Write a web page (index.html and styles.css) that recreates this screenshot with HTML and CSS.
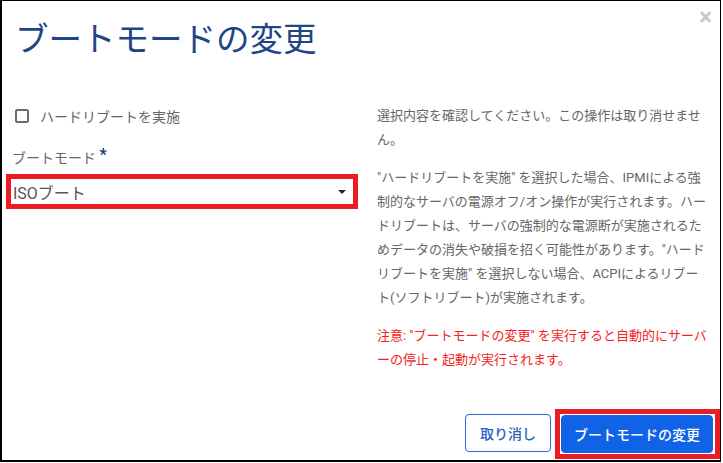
FILE: index.html
```html
<!DOCTYPE html>
<html lang="ja">
<head>
<meta charset="utf-8">
<title>ブートモードの変更</title>
<meta name="viewport" content="width=device-width, initial-scale=1">
<link rel="stylesheet" href="styles.css">
</head>
<body>

<div class="dialog">
	<div class="dialog-head">
		<h1>ブートモードの変更</h1>
		<span class="close">&times;</span>
	</div><!-- dialog-head -->

	<div class="dialog-body">
		<div class="col-left">
			<label class="check-row">
				<span class="checkbox"></span>
				ハードリブートを実施
			</label>

			<div class="field-label">ブートモード <span class="req">*</span></div>
			<div class="select mark">
				<span>ISOブート</span>
				<span class="caret"></span>
			</div>
		</div><!-- col-left -->

		<div class="col-right">
			<p>選択内容を確認してください。この操作は取り消せません。</p>
			<p>"ハードリブートを実施" を選択した場合、IPMIによる強制的なサーバの電源オフ/オン操作が実行されます。ハードリブートは、サーバの強制的な電源断が実施されるためデータの消失や破損を招く可能性があります。"ハードリブートを実施" を選択しない場合、ACPIによるリブート(ソフトリブート)が実施されます。</p>
			<p class="warn">注意: "ブートモードの変更" を実行すると自動的にサーバーの停止・起動が実行されます。</p>
		</div><!-- col-right -->
	</div><!-- dialog-body -->

	<div class="dialog-foot">
		<button class="btn btn-outline">取り消し</button>
		<span class="mark mark-btn">
			<button class="btn btn-primary">ブートモードの変更</button>
		</span>
	</div><!-- dialog-foot -->
</div><!-- dialog -->

</body>
</html>
```

FILE: styles.css
```css
body {
	margin: 0; padding: 0;
	font-family: Roboto, "Noto Sans CJK JP", sans-serif;
	background: #fff;
}

.dialog {
	box-sizing: border-box;
	width: 721px;
	height: 462px;
	border: 1px solid #000;
	border-left-width: 2px;
	border-bottom-width: 2px;
	display: flex;
	flex-direction: column;
	position: relative;
}

.dialog-head {
	padding: 15px 13px 0;
	height: 87px;
	box-sizing: border-box;
}

	.dialog-head h1 {
		margin: 0;
		font-family: "Noto Sans CJK JP", sans-serif;
		font-weight: 400;
		font-size: 33.5px;
		line-height: 42px;
		color: #1f4586;
	}

	.dialog-head .close {
		position: absolute;
		top: 4px;
		right: 8px;
		font-size: 24px;
		font-weight: bold;
		line-height: 24px;
		color: #c8c8c8;
	}

.dialog-body {
	display: flex;
	padding: 16px 0 0 4px;
}

.col-left {
	width: 352px;
	font-size: 14px;
	color: #666;
}

	.check-row {
		display: flex;
		align-items: center;
		height: 24px;
		padding-left: 9px;
	}

	.checkbox {
		box-sizing: border-box;
		width: 14px;
		height: 14px;
		border: 2px solid #6d6d6d;
		border-radius: 2px;
		margin-right: 11px;
	}

	.field-label {
		margin-top: 15px;
		line-height: 24px;
		padding-left: 6px;
	}

	.field-label .req {
		color: #1d3a72;
		font-weight: bold;
		font-size: 16px;
		vertical-align: 3px;
	}

	.select {
		margin-top: 4px;
		height: 22px;
		display: flex;
		align-items: center;
		justify-content: space-between;
		padding: 2px 7px 1px 2px;
		font-size: 16px;
		color: #555;
	}

	.select .caret {
		width: 0; height: 0;
		border-left: 4px solid transparent;
		border-right: 4px solid transparent;
		border-top: 4px solid #222;
	}

	/* red marks around the items */
	.mark {
		border: 5px solid #ec1c24;
	}

.col-right {
	width: 332px;
	margin-left: 19px;
	font-size: 13px;
	line-height: 24px;
	color: #666;
}

	.col-right p {
		margin: 0 0 14px;
	}

	.col-right p.warn {
		color: #f52222;
	}

.dialog-foot {
	margin-top: auto;
	display: flex;
	justify-content: flex-end;
	align-items: flex-end;
	padding: 0 0 1px 0;
}

.btn {
	height: 38px;
	border-radius: 4px;
	font-family: Roboto, "Noto Sans CJK JP", sans-serif;
	font-size: 14px;
	font-weight: 500;
	padding: 0;
	white-space: nowrap;
	cursor: pointer;
	display: block;
}

.btn-outline {
	width: 86px;
	margin-bottom: 7px;
	background: #fff;
	border: 1px solid #2a6ad8;
	color: #2a62c0;
}

.btn-primary {
	width: 152px;
	background: #1062e6;
	border: 1px solid #1062e6;
	color: #fff;
}

.mark-btn {
	display: block;
	margin-left: 4px;
	padding: 1px 2px 1px 1px;
}
```
